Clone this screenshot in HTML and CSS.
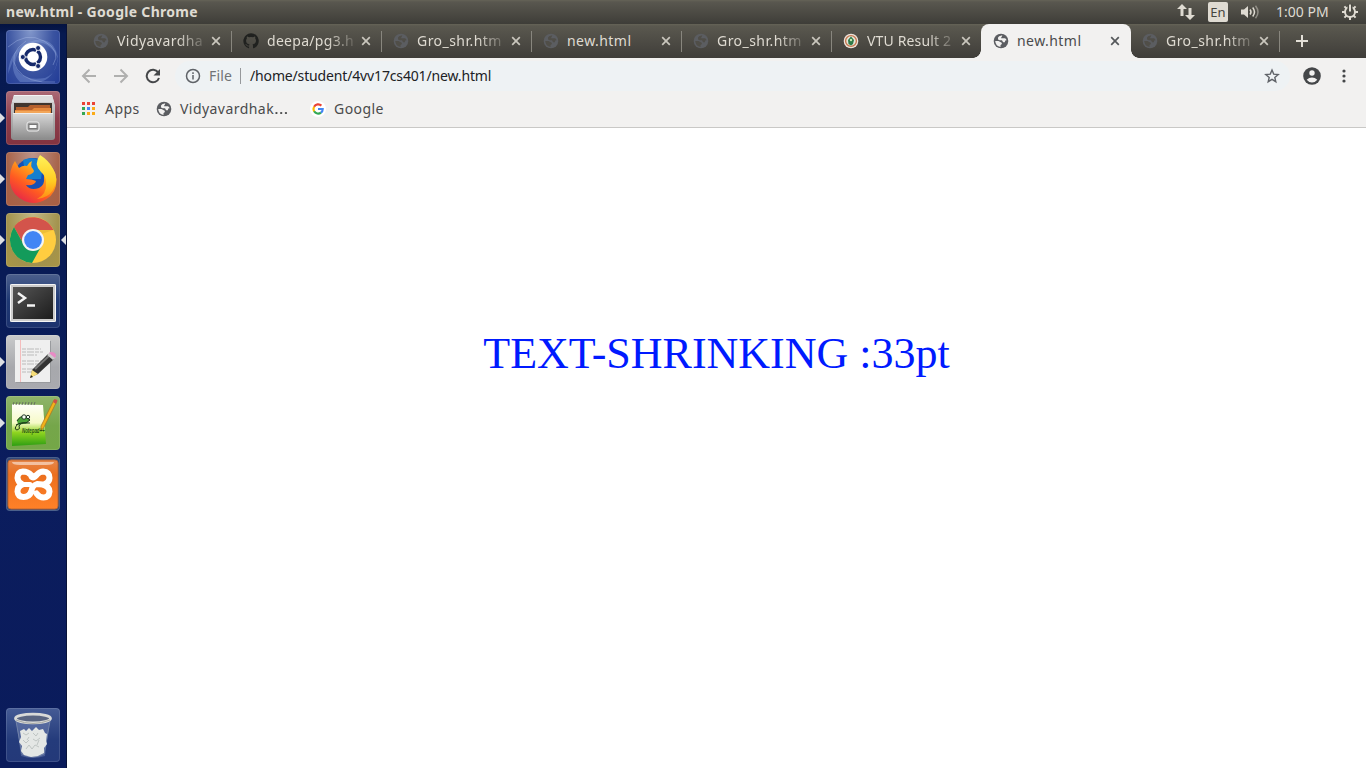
FILE: index.html
```html
<!DOCTYPE html>
<html lang="en">
<head>
<meta charset="utf-8">
<title>new.html</title>
<link rel="stylesheet" href="styles.css">
</head>
<body>
<svg class="defs" width="0" height="0">
  <defs>
    <symbol id="globe" viewBox="0 0 16 16"><circle cx="8" cy="8" r="7.3" fill="currentColor"/><path class="land" d="M9.300 2.200 6.200 3.300Q4.500 4.500 5 6.300q.7 1 2 1h2l1.100 1.900h1.700l.5-1.600 1.300-.3q-.4-1.600-1.600-2.100H8.200q-.4-.8.5-1.300ZM2.200 8h3.300l3.200 1.800q.5.900-.3 1.800l-.9.500v1.800Q2.700 13.400 2.200 8Z"/></symbol>
    <symbol id="x" viewBox="0 0 10 10"><path d="m1.200 1.200 7.600 7.600m0-7.600L1.200 8.800" fill="none" stroke="currentColor" stroke-width="1.700"/></symbol>
    <linearGradient id="metal" x1="0" y1="0" x2="0" y2="1"><stop stop-color="#d8d8d8"/><stop offset="1" stop-color="#8c8c8c"/></linearGradient>
    <linearGradient id="fox" x1=".9" y1="0" x2=".2" y2="1"><stop stop-color="#fff044"/><stop offset=".35" stop-color="#ffa21a"/><stop offset=".65" stop-color="#ff5a22"/><stop offset="1" stop-color="#e3204e"/></linearGradient>
    <linearGradient id="flame" x1="0" y1="0" x2="0" y2="1"><stop stop-color="#fff35a"/><stop offset=".6" stop-color="#ffcb22"/><stop offset="1" stop-color="#ff8b16"/></linearGradient>
    <linearGradient id="screen" x1="0" y1="0" x2="1" y2="1"><stop stop-color="#555"/><stop offset="1" stop-color="#1c1c1c"/></linearGradient>
    <linearGradient id="grass" x1="0" y1="0" x2="0" y2="1"><stop stop-color="#fffff9"/><stop offset=".45" stop-color="#f6fac8"/><stop offset=".68" stop-color="#8fd420"/><stop offset="1" stop-color="#2e9e12"/></linearGradient>
    <linearGradient id="orange" x1="0" y1="0" x2="0" y2="1"><stop stop-color="#e5874b"/><stop offset=".3" stop-color="#ec6f1e"/><stop offset="1" stop-color="#ff8128"/></linearGradient>
  </defs>
</svg>

<header class="panel">
  <span class="panel-title">new.html - Google Chrome</span>
  <div class="indicators">
    <svg class="net" width="18" height="16" viewBox="0 0 18 16"><path d="M5 0 0 5h3.500v7h3V5H10ZM13 16l5-5h-3.500V4h-3v7H8Z"/></svg>
    <span class="lang">En</span>
    <svg class="vol" width="21" height="16" viewBox="0 0 21 16"><path d="M1 5.500h3L8 2v12l-4-3.500H1Z"/><path class="wave" d="M10 5.500q2 2.500 0 5M12.700 3.500q3.600 4.500 0 9"/><path class="wave dim" d="M15.500 1.700q5 6.300 0 12.600"/></svg>
    <span class="clock">1:00 PM</span>
    <svg class="gear" width="16" height="16" viewBox="0 0 16 16"><circle class="ring" cx="8" cy="8" r="5"/><path class="teeth" d="M12.500 8H16M8 12.500V16M3.500 8H0M11.200 4.800l2.400-2.400M4.800 4.800 2.400 2.400M11.200 11.200l2.400 2.400M4.800 11.200l-2.400 2.400"/><path class="notch" d="M8 0v7"/><path class="teeth" d="M8 .5v7"/></svg>
  </div>
</header>

<div class="desktop">
  <nav class="launcher">
    <div class="tile dash"><svg viewBox="0 0 54 54"><path d="M2 44Q3 17 29 10q20-3 23 19Q43 9 25 13 9 19 9 36Q16 52 39 48q14-5 13-27 0 25-17 31H14Q4 42 8 28L2 44Z" fill="#9cb6ed" opacity=".3"/><g fill="none" stroke="#b8c9f2" opacity=".35"><path d="M2 17Q20 1 38 11t9 24M49 52Q21 54 11 39T20 11"/></g><circle cx="27" cy="27" r="14.300" fill="#fff"/><circle cx="27" cy="27" r="7.500" fill="none" stroke="#15296b" stroke-width="3.400"/><g stroke="#fff" stroke-width="1.200"><path d="M22 27h-5M29.500 31.300l2.500 4.300M29.500 22.700l2.500-4.300"/></g><g fill="#15296b" stroke="#fff" stroke-width=".8"><circle cx="16.800" cy="27" r="2.500"/><circle cx="32.100" cy="18" r="2.500"/><circle cx="32.100" cy="36" r="2.500"/></g></svg></div>
    <div class="tile files"><svg viewBox="0 0 54 54"><path d="M8 4h38l3 10v32q0 3-3 3H8q-3 0-3-3V14Z" fill="url(#metal)"/><path d="M8 4h38l2 7H6Z" fill="#ddd"/><path d="M8 4.500h38" stroke="#f5f5f5"/><path d="M8 12h38v13H8Z" fill="#40352e"/><path d="M10 16h12l2-2h20v12H10Z" fill="#b5602d"/><path d="M9 19h17l2-2h17v8H9Z" fill="#e68a3d"/><path d="M9 21h35" stroke="#ffc277"/><path d="M7 22h40v26H7Z" fill="url(#metal)"/><path d="M7 22.500h40" stroke="#eee"/><rect x="21" y="31" width="12" height="9" rx="2" fill="#999" stroke="#eee"/><rect x="23" y="33.500" width="8" height="4" fill="#fafafa" stroke="#777"/></svg><i class="arrow"></i></div>
    <div class="tile firefox"><svg viewBox="0 0 54 54"><circle cx="27" cy="25" r="19" fill="#1650b5"/><path d="M17 8q12-5 20 4l-2 15H20Z" fill="#147fd0"/><path d="M9 9l4 7q4-3 8-2 2-4 5-5-2 5 1 8l1 2q-1 3-6 4l-2 4q6 0 10 2-1 5-10 4 4 6 13 3 6-3 5-10L38 8q12 8 12.500 20 0 13-10 19-11 7-22 2Q6 43 4 31 3 17 9 9Z" fill="url(#fox)"/><path d="M34 3q8 5 12 12 8 12 1 23-5 8-16 9 10-5 9-16 0-7-5-11-8-8-1-17Z" fill="url(#flame)"/></svg><i class="arrow"></i></div>
    <div class="tile chrome"><svg viewBox="0 0 54 54"><circle cx="27" cy="27" r="23" fill="#ffcd40"/><path d="M8 14A23 23 0 0 1 47.500 17H27L17 30Z" fill="#d3544b"/><path d="M8 14A23 23 0 0 0 26 50L36 32H18Z" fill="#139b5b"/><path d="M27 17h20.500l-12 4Z" fill="#d2a72d" opacity=".4"/><circle cx="27" cy="27" r="11" fill="#f4f4f4"/><circle cx="27" cy="27" r="8.900" fill="#4285f4"/></svg><i class="arrow"></i><i class="arrow focus"></i></div>
    <div class="tile terminal"><svg viewBox="0 0 54 54"><rect x="4" y="10" width="46" height="38" rx="1.500" fill="#ccc"/><rect x="4.500" y="10.500" width="45" height="37" rx="1" fill="none" stroke="#f5f5f5"/><rect x="7" y="13" width="40" height="32" fill="url(#screen)"/><path d="m12 19 7 5-7 5M21 31.500h8" fill="none" stroke="#f4f4f4" stroke-width="2.500"/></svg></div>
    <div class="tile editor"><svg viewBox="0 0 54 54"><path d="M10 6h35v42H10Z" fill="#999b9e"/><path d="M9 5h35v42H9Z" fill="#efefef"/><path d="M14.500 5v42" stroke="#f4bcbc"/><path d="M16 14h19M16 17h21M16 20h15M16 26h20M16 29h17M16 34h13M16 37h10" stroke="#bbb" stroke-dasharray="4 1 7 1"/><path d="m26 35 16-16 6 5-16 15-7 3Z" fill="#333"/><path d="m29 34 16-15" stroke="#777" stroke-width="2"/><path d="m41 20 3-3 6 5-3 3Z" fill="#ccc"/><path d="m43 18 2-1q5 0 5 4l-1 2Z" fill="#e88bc5"/><path d="m26 35 6 4-8 4Z" fill="#f6dd78"/><path d="m24 43 1-3 2 2Z" fill="#222"/></svg><i class="arrow"></i></div>
    <div class="tile notepad"><svg viewBox="0 0 54 54"><path d="m6 8 31 1 3 39-34 2Z" fill="url(#grass)"/><path d="m7 9 1-3m2 3 1-3m2 3 1-3m2 3 1-3m2 3 1-3m2 3 1-3m2 3 1-3m2 3 1-3" stroke="#68735f"/><path d="M11 25q3-6 9-4l4 3-4 3q-5-1-7 3M10 29q4-3 14-2" fill="#4aa337" stroke="#183618"/><circle cx="18" cy="21" r="2.200" fill="#f6fff3" stroke="#253825"/><circle cx="22" cy="21" r="1.700" fill="#f6fff3" stroke="#253825"/><path d="M12 28q-5 5-1 6 4-1 2-4" fill="none" stroke="#233918"/><path d="m48 4 3 1-13 26-3 4v-5Z" fill="#f2b21a" stroke="#aa711d" stroke-width=".7"/><path d="m47 6 1.500-3 3 1-1.500 4Z" fill="#cd5147"/><text transform="translate(16 37) scale(.55 1)" class="notetext">Notepad++</text></svg><i class="arrow"></i></div>
    <div class="tile xampp"><svg viewBox="0 0 54 54"><rect x="2" y="3" width="50" height="49" rx="3" fill="url(#orange)" stroke="#bd642e"/><path d="M6 5h42q0 3-8 3H14q-8 0-8-3Z" fill="#fff" opacity=".5"/><g fill="none" stroke="#fff" stroke-width="6" stroke-linejoin="round" stroke-linecap="round"><path d="M25 18Q22 14.500 17 14.500 11.500 15 11.500 21q.5 4.500 5 6.500-5 2-5 7 .5 5.500 6 5.500 6 0 8-6 .5-5.500 5.500-7l5.500.5q7 2 7 7-.5 6-6 6-4 0-7-4M25 18q.5 2.500 2 2.500t4-3q3-3 6-3 6.500.5 6.500 6.500 0 4-5 6.500"/><path d="M17 27.500h7" stroke-width="5"/></g></svg></div>
    <div class="tile trash"><svg viewBox="0 0 54 54"><path d="m10 12 5 36q12 4 24 0l5-36Z" fill="#dbe5ff" opacity=".2"/><path d="m10 13 6 33q11 6 22 0l6-33" fill="none" stroke="#7182a8"/><path d="m14 23 4-2 2 2 3-3 3 3 4-4 3 3 4-1 2 4 2 1-1 7 1 3-3 4v5l-6 3-7 1-7-2-3-4 1-5-3-4 2-5Z" fill="#e4e7e5"/><path d="m17 25 3 2 3-2m4 0 3 3 2-3M17 32l3 3 3-3m4-1 3 2 4-3M20 41l3-4 3 4 3-4 4 2M23 29l-2 3m12 0-2 5" fill="none" stroke="#bfc5c3"/><ellipse cx="27" cy="10.500" rx="17.500" ry="4.300" fill="#5a6581" stroke="#d9dad8" stroke-width="2.800"/><path d="M10 12q17 7 34 0" fill="none" stroke="#a5a7a4"/></svg></div>
  </nav>

  <main class="browser">
    <div class="tabs">
      <div class="tab"><svg class="fav"><use href="#globe"/></svg><span class="label fade">Vidyavardha</span><svg class="close"><use href="#x"/></svg></div>
      <div class="tab"><svg class="fav git" viewBox="0 0 16 16"><path d="M8 .3a7.700 7.700 0 0 0-2.400 15c.4.1.5-.2.5-.4v-1.400c-2.100.5-2.600-.9-2.600-.9-.4-.9-.9-1.100-.9-1.100-.7-.5.1-.5.1-.5.800.1 1.200.800 1.200.800.700 1.200 1.800.900 2.200.700.1-.5.300-.900.500-1.100-1.700-.2-3.500-.9-3.500-3.800 0-.8.3-1.500.8-2.100-.1-.2-.4-1 .1-2.100 0 0 .7-.2 2.100.8a7.300 7.300 0 0 1 3.900 0c1.500-1 2.100-.8 2.100-.8.400 1.100.200 1.900.1 2.100.5.600.8 1.300.8 2.100 0 3-1.800 3.600-3.500 3.800.3.300.5.700.5 1.400v2.100c0 .2.100.5.500.4A7.700 7.700 0 0 0 8 .3Z"/></svg><span class="label fade deepa">deepa/pg3.h</span><svg class="close"><use href="#x"/></svg></div>
      <div class="tab"><svg class="fav"><use href="#globe"/></svg><span class="label fade">Gro_shr.htm</span><svg class="close"><use href="#x"/></svg></div>
      <div class="tab"><svg class="fav"><use href="#globe"/></svg><span class="label">new.html</span><svg class="close"><use href="#x"/></svg></div>
      <div class="tab"><svg class="fav"><use href="#globe"/></svg><span class="label fade">Gro_shr.htm</span><svg class="close"><use href="#x"/></svg></div>
      <div class="tab before-active"><svg class="fav" viewBox="0 0 16 16"><circle cx="8" cy="8" r="7.300" fill="#eee4dc"/><circle cx="8" cy="8" r="5.400" fill="#e3e6dc" stroke="#c5784f" stroke-width="1.400"/><path d="M8 3.500 11 7l-1 4-2 1.500L5.500 11 5 7Z" fill="#2f7a48"/><circle cx="8" cy="7" r="1.200" fill="#c9e8b2"/></svg><span class="label fade vtu">VTU Result 2</span><svg class="close"><use href="#x"/></svg></div>
      <div class="tab active"><svg class="fav"><use href="#globe"/></svg><span class="label">new.html</span><svg class="close"><use href="#x"/></svg></div>
      <div class="tab last"><svg class="fav"><use href="#globe"/></svg><span class="label fade">Gro_shr.htm</span><svg class="close"><use href="#x"/></svg></div>
      <svg class="plus" viewBox="0 0 12 12"><path d="M6 0v12M0 6h12"/></svg>
    </div>
    <div class="toolbar">
      <svg class="nav" viewBox="0 0 16 16"><path d="M15 8H2m6.500-6.500L2 8l6.500 6.500"/></svg>
      <svg class="nav" viewBox="0 0 16 16"><path d="M1 8h13M7.500 1.500 14 8l-6.500 6.500"/></svg>
      <svg class="nav reload" viewBox="0 0 16 16"><path d="M13.200 4.400A6.300 6.300 0 1 0 14 10"/><path class="head" d="M15 1v6.500H8.500Z"/></svg>
      <div class="omnibox">
        <svg class="info" viewBox="0 0 16 16"><circle cx="8" cy="8" r="6.500"/><path d="M8 7v4.500M8 4.300V6"/></svg>
        <span class="scheme">File</span><span class="divider"></span><span class="url">/home/student/4vv17cs401/new.html</span>
        <svg class="star" viewBox="0 0 16 16"><path d="m8 2 1.700 4.100 4.500.4-3.400 2.900 1 4.300L8 11.400l-3.800 2.300 1-4.300-3.400-2.900 4.500-.4Z"/></svg>
      </div>
      <svg class="user" viewBox="0 0 18 18"><circle cx="9" cy="9" r="8.800"/><circle class="cut" cx="9" cy="6" r="2.700"/><path class="cut" d="M3.700 12.700Q6 10.400 9 10.400t5.300 2.300Q12.300 15.400 9 15.400t-5.300-2.700Z"/></svg>
      <svg class="more" viewBox="0 0 4 14"><circle cx="2" cy="2" r="1.600"/><circle cx="2" cy="7" r="1.600"/><circle cx="2" cy="12" r="1.600"/></svg>
    </div>
    <div class="bookmarks">
      <span class="apps"><i class="r"></i><i class="r"></i><i class="r"></i><i class="g"></i><i class="b"></i><i class="y"></i><i class="g"></i><i class="y"></i><i class="y"></i></span>
      <span class="bm bm-apps">Apps</span>
      <svg class="fav"><use href="#globe"/></svg>
      <span class="bm bm-vid">Vidyavardhak<span class="dots">…</span></span>
      <svg class="goog" viewBox="0 0 16 16"><circle cx="8" cy="8" r="8" fill="#fff"/><g fill="none" stroke-width="2.200"><path d="M4.100 5.800A4.700 4.700 0 0 1 11.400 4.600" stroke="#ea4335"/><path d="M4.100 5.700a4.700 4.700 0 0 0 0 4.700" stroke="#fbbc05"/><path d="M4.100 10.300A4.700 4.700 0 0 0 11 11.600" stroke="#34a853"/><path d="M8 8h4.700q0 2.500-1.800 3.700" stroke="#4285f4"/></g></svg>
      <span class="bm bm-goog">Google</span>
    </div>
    <section class="page"><p class="message">TEXT-SHRINKING :33pt</p></section>
  </main>
</div>
</body>
</html>
```
FILE: styles.css
```css
* { box-sizing: border-box; }
body { margin: 0; width: 1366px; height: 768px; overflow: hidden; font-family: "Noto Sans", "Open Sans", sans-serif; font-size: 14px; }
svg { display: block; flex: none; }
.defs { position: absolute; }
.panel { height: 24px; display: flex; align-items: center; padding: 0 8px 0 6px; color: #dfdbd2; background: linear-gradient(#656357 0, #59574f 2px, #3e3d38); }
.panel-title { font-weight: 700; font-size: 14px; line-height: 24px; letter-spacing: .3px; white-space: nowrap; }
.indicators { margin-left: auto; display: flex; align-items: center; fill: #dfdbd2; }
.net { margin-right: 13px; }
.lang { width: 20px; height: 20px; border-radius: 2px; background: #dfdbd2; color: #45443e; font-size: 13px; line-height: 20px; text-align: center; margin-right: 12px; }
.vol { margin-right: 15px; }
.wave { fill: none; stroke: #dfdbd2; stroke-width: 1.5; }
.dim { opacity: .45; }
.clock { width: 53px; white-space: nowrap; margin-right: 13px; padding-bottom: 2px; }
.ring { fill: none; stroke: #dfdbd2; stroke-width: 2; }
.teeth { stroke: #dfdbd2; stroke-width: 2; }
.notch { stroke: #4b4a43; stroke-width: 5; }
.desktop { display: flex; height: 744px; }
.launcher { width: 67px; padding: 6px; display: flex; flex-direction: column; gap: 7px; background: linear-gradient(#041341 0, #071a50 10px, #081b56 250px, #0b1d5e 60%, #0a1b5b); border-right: 1px solid #081238; }
.tile { width: 54px; height: 54px; flex: none; border-radius: 4px; position: relative; box-shadow: inset 0 0 0 1px #ffffff20; }
.tile svg { width: 54px; height: 54px; }
.dash { background: radial-gradient(ellipse at 45% 0, #8297cb, #3a53a0 55%, #213b97); }
.files { background: linear-gradient(#ab6a76, #8d3e4c 50%, #83333f); }
.firefox { background: radial-gradient(ellipse at top, #bd958b, #a76349 70%, #a95f43); }
.chrome { background: radial-gradient(ellipse at top, #c1b785, #a2924c 70%, #aa9645); }
.terminal { background: linear-gradient(#4b5f8c, #1f3974 50%, #1c326e); }
.editor { background: linear-gradient(#c9cacb, #a7a8ac 60%, #a9aaaf); }
.notepad { background: linear-gradient(#8fb46a, #75a64a 55%, #74a747); }
.xampp { background: #324a7b; }
.trash { margin-top: auto; background: linear-gradient(#455b95, #243b7b 60%, #243979); }
.arrow { position: absolute; left: -6px; top: 22px; border: 5px solid transparent; border-left-color: #dddfe3; border-right: 0; }
.arrow.focus { left: 55px; border: 5px solid transparent; border-right-color: #dddfe3; border-left: 0; }
.notetext { font: italic 700 8px "Liberation Sans", sans-serif; fill: #275313; }
.browser { width: 1299px; display: flex; flex-direction: column; background: #f2f1f0; }
.tabs { height: 34px; display: flex; padding-left: 14px; background: linear-gradient(#656357 0, #5a584f 2px, #3f3d39); }
.tab { width: 150px; height: 34px; display: flex; align-items: center; padding-left: 12px; position: relative; color: #dfdbd2; --land: #504e48; }
.tab::after { content: ""; position: absolute; right: -1px; top: 7px; height: 21px; width: 1px; background: #88867e; }
.before-active::after, .active::after { display: none; }
.tab.last { width: 148px; padding-left: 11px; }
.tab.last::after { right: -1px; }
.fav { width: 16px; height: 16px; color: #5b5d61; }
.land { fill: var(--land); }
.git { fill: #20211f; }
.label { width: 87px; margin-left: 8px; padding-bottom: 2px; letter-spacing: .45px; white-space: nowrap; }
.fade { -webkit-mask-image: linear-gradient(90deg, #000 60px, #0003 86px); mask-image: linear-gradient(90deg, #000 60px, #0003 86px); }
.deepa { letter-spacing: .3px; }
.vtu { letter-spacing: .15px; }
.close { width: 10px; height: 10px; margin-left: 7px; color: #c9c6bd; }
.active { background: #f2f1f0; color: #4a4b4c; border-radius: 8px 8px 0 0; --land: #f2f1f0; }
.active::before { content: ""; position: absolute; left: -8px; right: -8px; bottom: 0; height: 8px; background: radial-gradient(circle at 0 0, transparent 7.5px, #f2f1f0 8px) left / 8px 8px no-repeat, radial-gradient(circle at 100% 0, transparent 7.5px, #f2f1f0 8px) right / 8px 8px no-repeat; }
.active .close { color: #55585b; margin-left: 6px; }
.last .close { margin-left: 6px; }
.plus { width: 12px; height: 12px; margin: 11px 0 0 17px; fill: none; stroke: #e3dfd7; stroke-width: 2; }
.toolbar { height: 36px; display: flex; align-items: center; padding-left: 14px; }
.nav { width: 16px; height: 16px; margin-right: 16px; fill: none; stroke: #b0b0af; stroke-width: 2; }
.reload { stroke: #454749; margin-right: 14px; }
.head { fill: #454749; stroke: none; }
.omnibox { width: 1115px; height: 30px; margin-bottom: 1px; border-radius: 15px; background: #eef2f4; display: flex; align-items: center; padding: 0 10px; }
.info { width: 16px; height: 16px; fill: none; stroke: #5f6368; stroke-width: 1.5; }
.scheme { width: 24px; margin-left: 8px; color: #707376; letter-spacing: .2px; white-space: nowrap; }
.divider { width: 1px; height: 16px; margin: 0 9px 0 7px; background: #96999c; }
.url { color: #202124; letter-spacing: -.15px; white-space: nowrap; }
.star { width: 16px; height: 16px; margin-left: auto; fill: none; stroke: #5f6368; stroke-width: 1.4; }
.user { width: 18px; height: 18px; margin-left: 13px; fill: #454749; }
.cut { fill: #f2f1f0; }
.more { width: 4px; height: 14px; margin-left: 21px; fill: #454749; }
.bookmarks { height: 34px; display: flex; align-items: center; padding: 0 0 4px 15px; border-bottom: 1px solid #c9c8c6; color: #4a4b4c; --land: #f2f1f0; }
.apps { display: grid; grid-template-columns: repeat(3, 3px); gap: 2px; }
.apps i { width: 3px; height: 3px; }
.r { background: #ea4335; } .g { background: #34a853; } .b { background: #4285f4; } .y { background: #fbab18; }
.bm { white-space: nowrap; margin-left: 8px; padding-bottom: 1px; letter-spacing: .45px; }
.bm-apps { width: 51px; margin-left: 10px; }
.bm-vid { width: 130px; }
.dots { letter-spacing: 0; display: inline-block; transform: scaleX(1.3); transform-origin: 0 50%; }
.goog { width: 16px; height: 16px; }
.page { flex: 1; background: #fff; display: flex; justify-content: center; padding-top: 201px; }
.message { margin: 0; font: 33pt/50px "Liberation Serif", "Times New Roman", serif; color: #001aff; white-space: nowrap; }
```
